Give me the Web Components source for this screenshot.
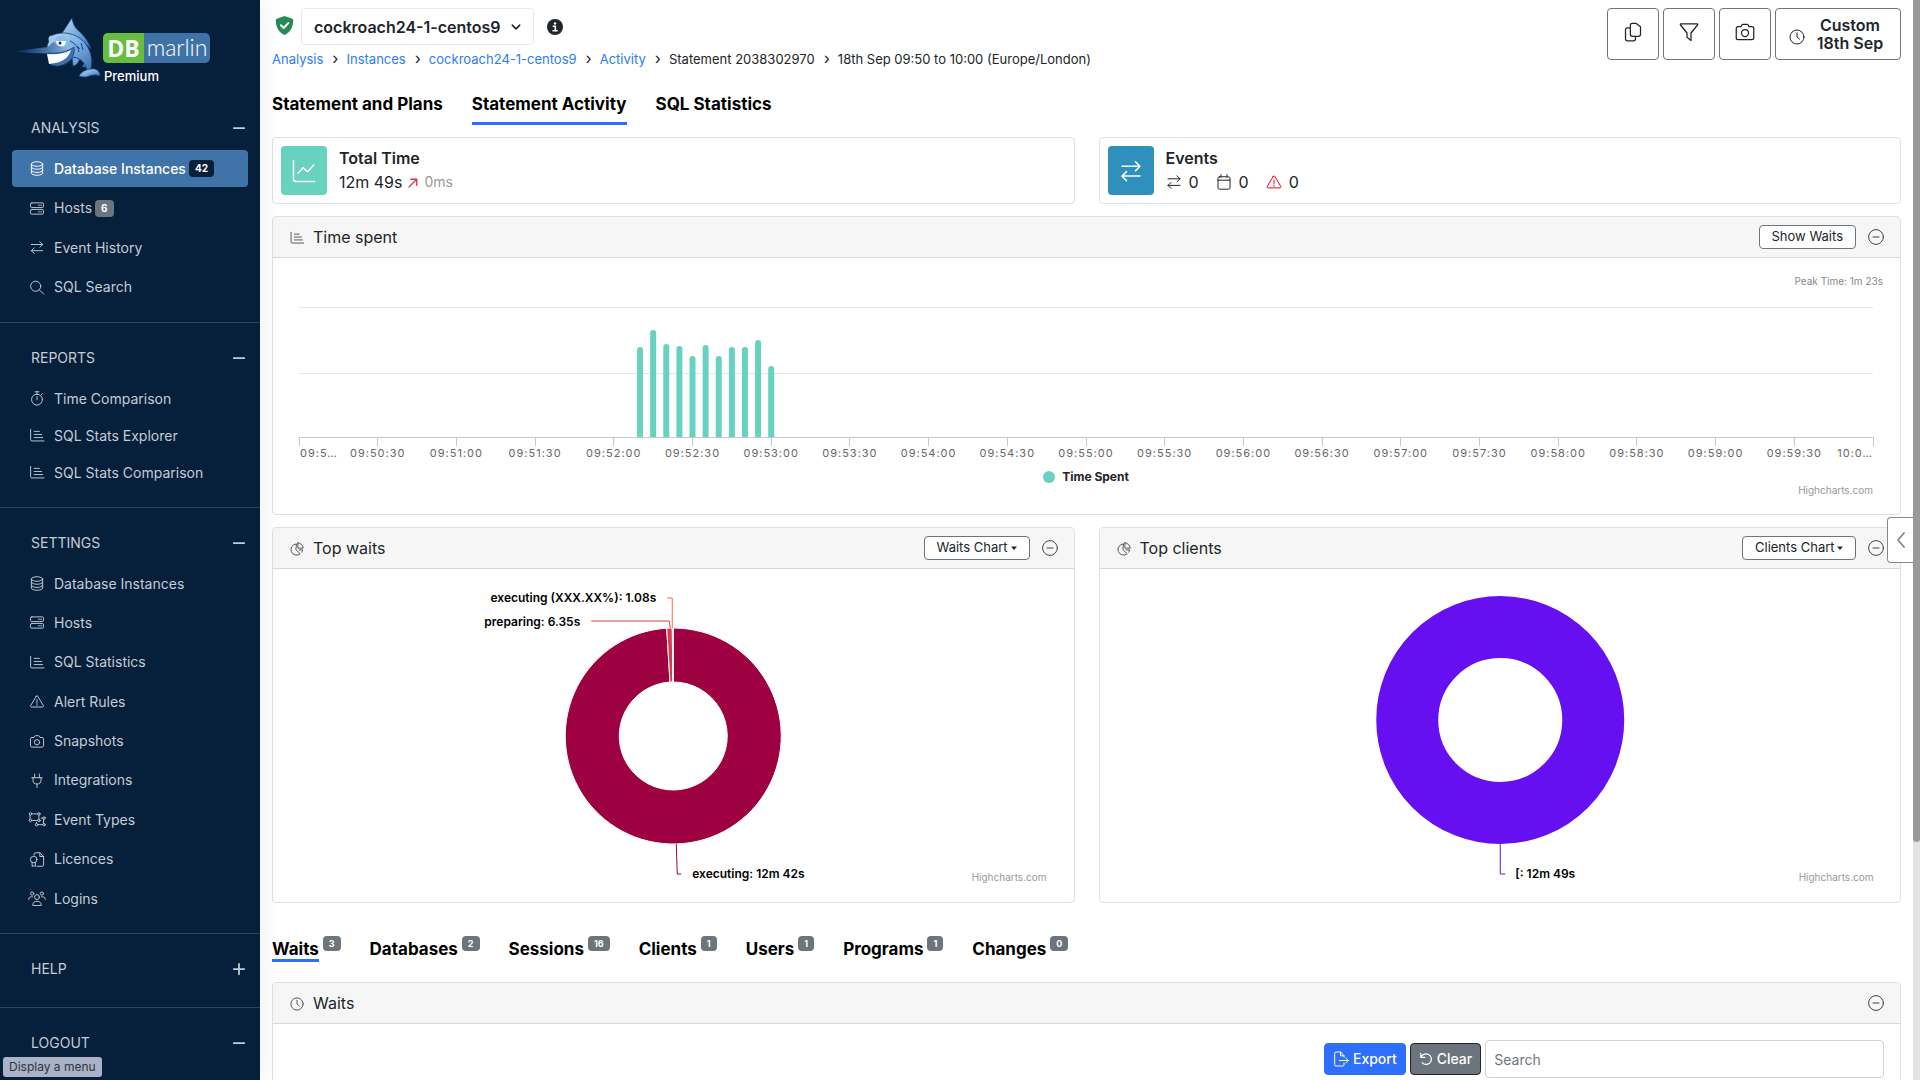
<!DOCTYPE html>
<html lang="en">
<head>
<meta charset="utf-8">
<title>DBmarlin - Statement Activity</title>
<style>
  html, body { margin: 0; height: 100%; }
  body { font: 16px/24px Inter, "Liberation Sans", sans-serif; color: #212529; background: #fff; overflow: hidden; }
</style>
</head>
<body>
<db-app></db-app>

<script>
const define = (name, css, html) => {
  customElements.define(name, class extends HTMLElement {
    connectedCallback() {
      if (this.shadowRoot) return;
      const root = this.attachShadow({ mode: 'open' });
      root.innerHTML = `<style>*{box-sizing:border-box} button,input,select{font:inherit;color:inherit;margin:0} ${css}</style>${html(this)}`;
    }
  });
};
const attr = (el, n, d = '') => el.getAttribute(n) ?? d;

/* ---------- icons: 16-unit grid, thin strokes ---------- */
const ICONS = {
  database: '<ellipse cx="8" cy="3.2" rx="6" ry="2.4"/><path d="M2 3.2v9.6c0 1.3 2.7 2.4 6 2.4s6-1.1 6-2.4V3.2M2 6.4c0 1.3 2.7 2.4 6 2.4s6-1.1 6-2.4M2 9.8c0 1.3 2.7 2.4 6 2.4s6-1.1 6-2.4"/>',
  hosts: '<rect x="1" y="2" width="14" height="5" rx="1.5"/><rect x="1" y="9" width="14" height="5" rx="1.5"/><path d="M9.5 4.5h1M12 4.5h1M9.5 11.5h1M12 11.5h1"/>',
  swap: '<path d="M2 4.8h12M11 1.8l3 3-3 3M14 11.4H2M5 8.4l-3 3 3 3"/>',
  search: '<circle cx="6.6" cy="6.6" r="5.4"/><path d="M10.6 10.6l4.6 4.6"/>',
  stopwatch: '<circle cx="8" cy="9.2" r="5.8"/><path d="M6 .8h4M8 .8v2.6M8 6v3.4M12.4 4.2l1.2-1.2"/>',
  bars: '<path d="M1.2 1.5v11c0 .8.5 1.3 1.3 1.3h13M5 3.6h5.5M5 6.9h8M5 10.2h9"/>',
  line: '<path d="M1 1v12.4c0 1 .6 1.6 1.6 1.6H15M4 9.5l3.4-3.6 3 2.6L14.4 4"/>',
  alert: '<path d="M7.3 2.3L1.2 12.4c-.4.8 0 1.5.8 1.5h12c.8 0 1.2-.7.8-1.5L8.7 2.3c-.4-.6-1-.6-1.4 0zM8 6v4M8 11.4v.9"/>',
  camera: '<path d="M2.5 3.7h2.3l.8-1.5c.2-.3.4-.4.7-.4h3.4c.3 0 .5.1.7.4l.8 1.5h2.3c.9 0 1.5.6 1.5 1.5v7.3c0 .9-.6 1.5-1.5 1.5h-11c-.9 0-1.5-.6-1.5-1.5V5.2c0-.9.6-1.5 1.5-1.5z"/><circle cx="8" cy="8.8" r="2.8"/>',
  plug: '<path d="M5.5 1v4M10.5 1v4M2.5 5h11M3.7 5v2.5a4.3 4.3 0 0 0 8.6 0V5M8 11.8V15.5"/>',
  groups: '<rect x="1" y="2" width="9" height="7"/><path d="M12.5 6.5H15v7H7.5v-2.4"/><g fill="var(--icon-bg,#06203c)"><circle cx="1" cy="2" r="1.3"/><circle cx="10" cy="2" r="1.3"/><circle cx="1" cy="9" r="1.3"/><circle cx="10" cy="9" r="1.3"/><circle cx="15.5" cy="6.5" r="1.3"/><circle cx="15.5" cy="13.5" r="1.3"/><circle cx="7.5" cy="13.5" r="1.3"/></g>',
  licence: '<path d="M5 3.2V2.2C5 1.3 5.5.8 6.4.8H11L15 4.8v9c0 .9-.5 1.4-1.4 1.4H8M11 .8V4.8h4"/><circle cx="4.5" cy="8" r="3.5"/><path d="M2.8 11v4.5l1.7-1 1.7 1V11"/>',
  users: '<circle cx="2.8" cy="2.7" r="1.7"/><circle cx="13.2" cy="2.7" r="1.7"/><circle cx="8" cy="6.5" r="2.6"/><path d="M3.5 15c0-2.6 1.5-4 4.5-4s4.5 1.4 4.5 4zM-.8 9c0-1.8.8-2.8 2.8-2.8h1.2M16.8 9c0-1.8-.8-2.8-2.8-2.8h-1.2"/>',
  minus: '<path d="M2 8h12" stroke-width="2"/>',
  plus: '<path d="M2 8h12M8 2v12" stroke-width="2"/>',
  clock: '<circle cx="8" cy="8" r="7"/><path d="M8 3.8V8l2.6 2.2"/>',
  pie: '<path d="M7 2.200a6.400 6.400 0 1 0 4.600 11.300L7 9z"/><path d="M9 1v6h6A6 6 0 0 0 9 1zM13.500 11.600A6.400 6.400 0 0 0 14.400 9H10.500"/>',
  circleMinus: '<circle cx="8" cy="8" r="7.4"/><path d="M5 8h6"/>',
  copy: '<path d="M7.5 1h2.8l3.7 2.8v6c0 1-.6 1.6-1.6 1.6H7.5c-1 0-1.6-.6-1.6-1.6V2.6C5.9 1.6 6.5 1 7.5 1zM5.8 4.6H3.6C2.6 4.6 2 5.2 2 6.2v7.2c0 1 .6 1.6 1.6 1.6h4.8c1 0 1.6-.6 1.6-1.6v-2"/>',
  filter: '<path d="M1.5 1.5h13c.6 0 .6.4.3.9L9.6 8.8v6L6.4 12.2V8.8L1.2 2.4c-.3-.5-.3-.9.3-.9z"/>',
  calendar: '<rect x="2" y="2.8" width="12" height="12.4" rx="1.4"/><path d="M2 6.2h12M5 .6v2.4M11 .6v2.4"/>',
  arrowUp: '<path d="M2.5 13.5L13 3M5 3h8v8" stroke-width="1.8"/>',
  chevron: '<path d="M3 5.5l5 5 5-5" stroke-width="2"/>',
  chevronLeft: '<path d="M11 1L5 8l6 7" stroke-width="1.8"/>',
  caret: '<path d="M2 5h12L8 12z" fill="currentColor" stroke="none"/>',
  shield: '<path d="M8 0l6.5 2.4c.5.2.8.6.8 1.1 0 5-1.8 9.9-7.3 12.5C2.5 13.4.7 8.5.7 3.5c0-.5.3-.9.8-1.1z" fill="currentColor" stroke="none"/><path d="M5 7.8l2.3 2.3L11.2 6" stroke="#fff" stroke-width="1.7"/>',
  info: '<circle cx="8" cy="8" r="8" fill="currentColor" stroke="none"/><path d="M6.3 7.3h2v4.2M6 11.7h4.2" stroke="#fff" stroke-width="1.6"/><circle cx="8" cy="4.5" r="1.2" fill="#fff" stroke="none"/>',
  exportFile: '<path d="M11 6V4.8L7.5 1H3c-.8 0-1.3.5-1.3 1.3v11.4c0 .8.5 1.3 1.3 1.3h6.7c.8 0 1.3-.5 1.3-1.3V12M7.5 1v3.8H11M6.5 9.5h8.7M12.8 7l2.4 2.5-2.4 2.5"/>',
  undo: '<path d="M2 1.5v4.7h4.7M2.2 6C3.5 3.6 5.5 2.2 8.2 2.2a6 6 0 1 1-4.6 9.9" stroke-width="1.3"/>'
};
define('db-icon', ':host{display:inline-block;width:var(--icon,16px);height:var(--icon,16px);flex:none} svg{display:block;width:100%;height:100%;overflow:visible}',
  el => `<svg viewBox="0 0 16 16" fill="none" stroke="currentColor" stroke-width="1" stroke-linecap="round" stroke-linejoin="round" aria-hidden="true">${ICONS[attr(el, 'name')]}</svg>`);

/* ---------- sidebar ---------- */
define('brand-logo', `
  :host{display:flex;height:93px;padding:16px 50px 0 15px;color:#fff}
  .fish{width:88px;height:66px;flex:none}
  .words{padding-top:17px}
  .mark{display:flex;height:30px;border-radius:5px;overflow:hidden;background:#3f73a8}
  .db{background:#67bd3f;width:41px;text-align:center;font:700 23px/30px "Open Sans",sans-serif}
  .marlin{width:66px;text-align:center;font:300 23px/28px Lato,sans-serif}
  .tier{font-size:13px;line-height:18px;font-weight:500;padding:4px 0 0 1px}`,
  () => `<svg class="fish" viewBox="0 0 88 66" aria-hidden="true">
    <defs><linearGradient id="b" x1="0" y1="0" x2="1" y2="1"><stop offset="0" stop-color="#b9daf5"/><stop offset=".5" stop-color="#78aee0"/><stop offset="1" stop-color="#3768ad"/></linearGradient>
    <linearGradient id="n"><stop offset="0" stop-color="#06203c"/><stop offset=".35" stop-color="#2a5690"/><stop offset="1" stop-color="#9cc7ed"/></linearGradient></defs>
    <g stroke="#193e73" stroke-width=".8" stroke-linejoin="round">
    <path d="M45 20C50 13 54 6 57 2c1 6 3 10 8 14 5 5 9 10 11 17l-9-8-12-5z" fill="url(#b)"/>
    <path d="M57 41l1 9c3 0 6-4 7-8zM72 44l-5 7c5 0 9-2 10-6z" fill="#6ca2d9"/>
    <path d="M38 19c10-4 22-2 30 6 8 8 10 18 8 28l1 4-5-1c-1-8-5-13-13-15-5 5-10 9-18 9L36 38l-4-8 3-8z" fill="url(#b)"/>
    <path d="M77 53c4-1 8 2 8 7-5-2-9-1-13 1-3 0-6 0-8-1 3-5 8-7 13-7z" fill="url(#b)"/>
    <path d="M0 35l33-4 5-5c6-1 9 3 10 6l12-1c-4 3-9 5-15 6-15 1-30 0-45-1z" fill="url(#n)" stroke="none"/>
    <path d="M33 37c10 1 19-1 26-6 2 10-7 19-18 19l-5-1z" fill="#3b71b3"/></g>
    <path d="M32 38c8 1 16 0 24-4-2 7-8 12-16 13l-6 1z" fill="#fff"/>
    <circle cx="37" cy="23" r="3.5" fill="#9fc9ef"/><ellipse cx="46" cy="25" rx="6" ry="5.5" fill="#8ebbe8"/><path d="M41 25h10c0 7-9 7-10 0z" fill="#fff"/><circle cx="45" cy="27" r="1.5" fill="#122b54"/>
    <path d="M55 25c5 2 8 6 9 11M62 30l3 3M66 27l2 7" fill="none" stroke="#1b427b" stroke-width="1"/></svg>
  <div class="words"><div class="mark"><span class="db">DB</span><span class="marlin">marlin</span></div><div class="tier">Premium</div></div>`);

define('nav-section', `
  :host{display:block;padding:12px 0 16px;border-bottom:1px solid #2a4463}
  button{display:flex;align-items:center;justify-content:space-between;width:100%;height:45px;padding:0 14px 0 31px;border:0;background:none;font-size:14px;text-align:left}
  db-icon{--icon:14px}
  nav{display:flex;flex-direction:column;justify-content:space-between;min-height:var(--list,0)}`,
  el => `<button aria-expanded="${attr(el, 'sign', 'minus') === 'minus'}"><span>${attr(el, 'heading')}</span><db-icon name="${attr(el, 'sign', 'minus')}"></db-icon></button><nav><slot></slot></nav>`);

define('nav-item', `
  :host{display:block;margin:0 12px}
  a{display:flex;align-items:center;height:37px;padding-left:17px;gap:9px;border-radius:4px;color:inherit;text-decoration:none;font-size:14px;font-weight:400}
  .label{display:flex;align-items:center;gap:3px}
  db-icon{--icon:15px;width:16px}
  .badge{background:#6c757d;color:#fff;border-radius:4px;padding:0 6px;font-size:10px;line-height:17px;font-weight:700}
  :host([active]) a{background:#4074a8;color:#fff;font-weight:500}
  :host([active]) .badge{background:#06203c}`,
  el => `<a href="#"><db-icon name="${attr(el, 'icon')}"></db-icon><span class="label"><slot></slot>${el.hasAttribute('badge') ? `<span class="badge">${attr(el, 'badge')}</span>` : ''}</span></a>`);

define('side-bar', ':host{display:block;width:260px;flex:none;height:100%;overflow:hidden;background:#06203c;color:#c5ccd4;box-shadow:0 0 24px rgba(0,0,0,.08);z-index:1}',
  () => `<brand-logo></brand-logo>
  <nav-section heading="ANALYSIS" style="--list:156px">
    <nav-item icon="database" badge="42" active>Database Instances</nav-item><nav-item icon="hosts" badge="6">Hosts</nav-item>
    <nav-item icon="swap">Event History</nav-item><nav-item icon="search">SQL Search</nav-item>
  </nav-section>
  <nav-section heading="REPORTS">
    <nav-item icon="stopwatch">Time Comparison</nav-item><nav-item icon="bars">SQL Stats Explorer</nav-item><nav-item icon="bars">SQL Stats Comparison</nav-item>
  </nav-section>
  <nav-section heading="SETTINGS" style="--list:352px">
    <nav-item icon="database">Database Instances</nav-item><nav-item icon="hosts">Hosts</nav-item><nav-item icon="bars">SQL Statistics</nav-item>
    <nav-item icon="alert">Alert Rules</nav-item><nav-item icon="camera">Snapshots</nav-item><nav-item icon="plug">Integrations</nav-item>
    <nav-item icon="groups">Event Types</nav-item><nav-item icon="licence">Licences</nav-item><nav-item icon="users">Logins</nav-item>
  </nav-section>
  <nav-section heading="HELP" sign="plus"></nav-section>
  <nav-section heading="LOGOUT"></nav-section>`);

/* ---------- header ---------- */
define('page-header', `
  :host{display:flex;justify-content:space-between;align-items:flex-start;padding-top:8px}
  .row{display:flex;align-items:center;height:37px}
  .shield{--icon:19px;color:#258a53;margin:0 7px 3px 3px}
  .pick{display:flex;align-items:center;position:relative}
  select{appearance:none;height:37px;border:1px solid #e3ebee;border-radius:4px;background:#fff;padding:0 32px 0 12px;font-weight:600}
  .pick db-icon{--icon:12px;position:absolute;right:12px;pointer-events:none}
  .info{margin-left:13px}
  ol{display:flex;list-style:none;margin:4px 0 0;padding:0;font-size:13px;line-height:20px}
  li{display:flex}
  li+li::before{content:"›";padding:0 8px 0 9px;font-size:16px;line-height:18px;color:#212529}
  a{color:#2b7cf6;text-decoration:none}
  .tools{display:flex;gap:4px}
  button{display:flex;align-items:center;justify-content:center;width:52px;height:52px;border:1px solid #6c757d;border-radius:4px;background:#fff;padding:0}
  button db-icon{--icon:20px;margin-bottom:4px}
  .range{width:126px;gap:12px;padding-right:4px;font-weight:600;line-height:18px}
  .range db-icon{--icon:16px;margin:6px 0 0}`,
  () => `<div><div class="row"><db-icon class="shield" name="shield"></db-icon>
    <span class="pick"><select aria-label="Database instance"><option>cockroach24-1-centos9</option></select><db-icon name="chevron"></db-icon></span>
    <db-icon class="info" name="info"></db-icon></div>
    <ol><li><a href="#">Analysis</a></li><li><a href="#">Instances</a></li><li><a href="#">cockroach24-1-centos9</a></li><li><a href="#">Activity</a></li><li>Statement 2038302970</li><li>18th Sep 09:50 to 10:00 (Europe/London)</li></ol></div>
  <div class="tools"><button aria-label="Copy"><db-icon name="copy"></db-icon></button><button aria-label="Filter"><db-icon name="filter"></db-icon></button><button aria-label="Snapshot"><db-icon name="camera"></db-icon></button>
    <button class="range"><db-icon name="clock"></db-icon><span>Custom<br>18th Sep</span></button></div>`);

/* ---------- tabs ---------- */
define('tab-bar', ':host{display:flex;align-items:flex-start;gap:29px}', () => '<slot></slot>');
define('tab-link', `
  :host{display:flex;gap:4px;align-items:flex-start;color:#000}
  a{color:inherit;text-decoration:none;font-size:17px;line-height:28px;font-weight:700;padding-bottom:4px;border-bottom:3px solid transparent}
  :host([active]) a{border-color:#2e6fff}
  :host([compact]) a{line-height:20px;padding:0}
  span{margin-top:-3px;background:#6c757d;color:#fff;border-radius:4px;font-size:9px;line-height:15px;font-weight:700;padding:0 6px}`,
  el => `<a href="#"><slot></slot></a>${el.hasAttribute('badge') ? `<span>${attr(el, 'badge')}</span>` : ''}`);

/* ---------- cards and panels ---------- */
define('stat-card', `
  :host{display:flex;align-items:center;flex:1;height:67px;border:1px solid #dee2e6;border-radius:4px;padding:0 8px;gap:12px;box-sizing:border-box}
  .tile{display:grid;place-items:center;width:46px;height:49px;border-radius:4px;color:#fff;background:var(--tile)}
  .tile db-icon{--icon:24px}
  .text{padding-bottom:2px}
  h3{margin:0;font-size:16px;line-height:24px;font-weight:600}
  .value{display:flex;align-items:center;line-height:24px}`,
  el => `<div class="tile"><db-icon name="${attr(el, 'icon')}"></db-icon></div><div class="text"><h3>${attr(el, 'heading')}</h3><div class="value"><slot></slot></div></div>`);

define('panel-card', `
  :host{display:block;border:1px solid #dee0e2;border-radius:4px;overflow:hidden;background:#fff;box-sizing:border-box}
  header{display:flex;align-items:center;height:41px;padding:0 16px 0 17px;background:#f6f6f6;border-bottom:1px solid #d6d8da}
  header>db-icon{--icon:14px;color:#444;margin-top:2px}
  h2{flex:1;margin:0 0 0 9px;font-size:16px;line-height:24px;font-weight:400}
  .min{display:flex;border:0;background:none;padding:0;margin-left:12px;color:#444}`,
  el => `<header><db-icon name="${attr(el, 'icon')}"></db-icon><h2>${attr(el, 'heading')}</h2><slot name="tools"></slot><button class="min" aria-label="Collapse ${attr(el, 'heading')}"><db-icon name="circleMinus"></db-icon></button></header><slot></slot>`);

define('small-button', `
  :host{display:block} button{display:block;height:24px;border:1px solid #6c757d;border-radius:4px;background:#fff;padding:0 12px 2px;font-size:13px;line-height:20px}`,
  () => '<button><slot></slot></button>');
define('chart-select', `
  :host{display:flex;align-items:center;position:relative}
  select{appearance:none;height:24px;border:1px solid #6c757d;border-radius:4px;background:#fff;padding:0 20px 2px 12px;font-size:13px;line-height:20px}
  db-icon{--icon:8px;position:absolute;right:12px;pointer-events:none}`,
  el => `<select aria-label="Chart type"><option>${attr(el, 'value')}</option></select><db-icon name="caret"></db-icon>`);

/* ---------- charts ---------- */
define('time-chart', `
  :host{display:block;padding:16px 27px 18px 26px;height:256px;box-sizing:border-box}
  .peak{text-align:right;margin-right:-10px;font-size:10px;line-height:14px;color:#888}
  svg{display:block;width:100%;height:181px;overflow:visible}
  .lbl{font-size:11px;letter-spacing:1px;fill:#666}
  .legend{display:flex;justify-content:center;align-items:center;gap:7px;font-size:12px;line-height:16px;font-weight:700;color:#222}
  i{width:12px;height:12px;border-radius:50%;background:#68d2c0}
  .credit{text-align:right;font-size:10px;line-height:10px;color:#999}`,
  () => {
    const base = 149, heights = [90, 107, 93, 91, 81, 92, 81, 90, 90, 97, 71];
    let s = '';
    for (const y of [19, 85]) s += `<rect x="0" y="${y}" width="100%" height="1" fill="#e6e6e6"/>`;
    heights.forEach((h, i) => {
      const x = (26 + i) / 120 * 100;
      s += `<svg x="${x}%" y="0" overflow="visible"><path d="M-3 ${base}v${3 - h}a3 3 0 0 1 6 0v${h - 3}z" fill="#68d2c0"/></svg>`;
    });
    s += `<rect x="0" y="${base}" width="100%" height="1" fill="#c8c8c8"/>`;
    for (let i = 0; i <= 20; i++) {
      s += `<line x1="${i * 5}%" x2="${i * 5}%" y1="${base}" y2="${base + 9}" stroke="#c8c8c8" shape-rendering="crispEdges"/>`;
      const t = `09:${50 + (i >> 1)}:${i % 2 ? '30' : '00'}`;
      if (i === 0) s += `<text class="lbl" x="1" y="169">09:5…</text>`;
      else if (i === 20) s += `<text class="lbl" x="100%" y="169" text-anchor="end">10:0…</text>`;
      else s += `<text class="lbl" x="${i * 5}%" y="169" text-anchor="middle">${t}</text>`;
    }
    return `<div class="peak">Peak Time: 1m 23s</div><svg>${s}</svg><div class="legend"><i></i>Time Spent</div><div class="credit">Highcharts.com</div>`;
  });

define('donut-chart', `
  :host{display:block;height:333px}
  .canvas{display:block;width:100%;height:100%}
  text{font-size:12px;font-weight:600;fill:#000}
  .credit{font-size:10px;font-weight:400;fill:#999}`,
  el => {
    const { cy, outer, inner, slices } = JSON.parse(el.getAttribute('data'));
    const total = slices.reduce((a, s) => a + s.value, 0);
    const pt = (r, f) => `${r * Math.sin(f * 2 * Math.PI)} ${cy - r * Math.cos(f * 2 * Math.PI)}`;
    let at = 0, g = '';
    for (const s of slices) {
      const to = at + s.value / total;
      if (slices.length === 1) g += `<circle cy="${cy}" r="${(outer + inner) / 2}" fill="none" stroke="${s.color}" stroke-width="${outer - inner}"/>`;
      else { const big = to - at > .5 ? 1 : 0; g += `<path d="M${pt(outer, at)}A${outer} ${outer} 0 ${big} 1 ${pt(outer, to)}L${pt(inner, to)}A${inner} ${inner} 0 ${big} 0 ${pt(inner, at)}z" fill="${s.color}" stroke="#fff"/>`; }
      g += `<path d="${s.line}" fill="none" stroke="${s.color}"/><text x="${s.x}" y="${s.y}" text-anchor="${s.anchor}">${s.label}</text>`;
      at = to;
    }
    return `<svg class="canvas"><svg x="50%" overflow="visible">${g}</svg><text class="credit" x="100%" dx="-27" y="312" text-anchor="end">Highcharts.com</text></svg>`;
  });

/* ---------- table toolbar ---------- */
define('table-tools', `
  :host{display:flex;justify-content:flex-end;align-items:center;gap:4px;padding:16px}
  button{display:flex;align-items:center;gap:4px;height:32px;border:1px solid #2e6fff;border-radius:4px;background:#2e6fff;color:#fff;padding:0 8px;font-size:14px;font-weight:500}
  button.clear{background:#6c757d;border-color:#212529}
  .clear db-icon{--icon:14px}
  input{width:25%;min-width:200px;height:38px;border:1px solid #ced4da;border-radius:4px;padding:0 8px;font-size:14px;background:#fff}
  input::placeholder{color:#6c757d;opacity:1}`,
  () => `<button><db-icon name="exportFile"></db-icon>Export</button><button class="clear"><db-icon name="undo"></db-icon>Clear</button><input type="search" placeholder="Search" aria-label="Search">`);

/* ---------- application shell ---------- */
const WAITS = { cy: 167, outer: 108, inner: 54, slices: [
  { label: 'executing: 12m 42s', value: 762, color: '#9e0142', line: 'M3 275L4 305H8', x: 19, y: 309, anchor: 'start' },
  { label: 'preparing: 6.35s', value: 6.35, color: '#d53e4f', line: 'M-3 59L-4 52H-82', x: -93, y: 57, anchor: 'end' },
  { label: 'executing (XXX.XX%): 1.08s', value: 1.08, color: '#f46d43', line: 'M-1 59V29H-6', x: -17, y: 33, anchor: 'end' }] };
const CLIENTS = { cy: 151, outer: 124, inner: 62, slices: [
  { label: '[: 12m 49s', value: 769, color: '#6610f2', line: 'M0 275V305H5', x: 15, y: 309, anchor: 'start' }] };

define('db-app', `
  :host{display:flex;height:100vh;overflow:hidden;position:relative}
  main{flex:1;min-width:0;padding:0 12px;overflow:hidden}
  .top{margin-top:21px}
  .pair{display:flex;gap:24px;margin-top:12px}
  .pair>*{flex:1;min-width:0}
  .wide{margin-top:12px}
  .lower{margin-top:36px}
  .table{margin-top:20px}
  .muted{color:#999;font-size:14px;margin-left:5px}
  .up{--icon:12px;color:#e0304a;margin:2px 0 0 5px}
  .ev{display:flex;align-items:center;gap:7px;margin-right:17px}
  .ev db-icon{--icon:16px}
  .danger{color:#f00020}
  .drawer{position:absolute;right:7px;top:517px;width:26px;height:46px;border:1px solid #888;border-right:0;border-radius:4px 0 0 4px;background:#fff;display:grid;place-items:center;padding:0;color:#888;z-index:2}
  .scroll{width:7px;background:#e3e3e3}
  .scroll div{height:78%;background:#999;border-radius:0 0 4px 4px}
  .hint{position:absolute;left:3px;bottom:3px;z-index:3;background:#a9b2c7;color:#2f3640;font-size:12px;line-height:20px;border-radius:3px;padding:0 6px}`,
  () => `<side-bar></side-bar>
  <main>
    <page-header></page-header>
    <tab-bar class="top"><tab-link>Statement and Plans</tab-link><tab-link active>Statement Activity</tab-link><tab-link>SQL Statistics</tab-link></tab-bar>
    <div class="pair">
      <stat-card icon="line" heading="Total Time" style="--tile:#68d2c0"><span>12m 49s</span><db-icon class="up" name="arrowUp"></db-icon><span class="muted">0ms</span></stat-card>
      <stat-card icon="swap" heading="Events" style="--tile:#2f8fbd"><span class="ev"><db-icon name="swap"></db-icon>0</span><span class="ev"><db-icon name="calendar"></db-icon>0</span><span class="ev"><db-icon class="danger" name="alert"></db-icon>0</span></stat-card>
    </div>
    <panel-card class="wide" icon="bars" heading="Time spent"><small-button slot="tools">Show Waits</small-button><time-chart></time-chart></panel-card>
    <div class="pair">
      <panel-card icon="pie" heading="Top waits"><chart-select slot="tools" value="Waits Chart"></chart-select><donut-chart data='${JSON.stringify(WAITS)}'></donut-chart></panel-card>
      <panel-card icon="pie" heading="Top clients"><chart-select slot="tools" value="Clients Chart"></chart-select><donut-chart data='${JSON.stringify(CLIENTS)}'></donut-chart></panel-card>
    </div>
    <tab-bar class="lower"><tab-link compact active badge="3">Waits</tab-link><tab-link compact badge="2">Databases</tab-link><tab-link compact badge="16">Sessions</tab-link><tab-link compact badge="1">Clients</tab-link><tab-link compact badge="1">Users</tab-link><tab-link compact badge="1">Programs</tab-link><tab-link compact badge="0">Changes</tab-link></tab-bar>
    <panel-card class="table" icon="clock" heading="Waits"><table-tools></table-tools></panel-card>
  </main>
  <button class="drawer" aria-label="Open drawer"><db-icon name="chevronLeft"></db-icon></button>
  <div class="scroll"><div></div></div>
  <div class="hint">Display a menu</div>`);
</script>
</body>
</html>
